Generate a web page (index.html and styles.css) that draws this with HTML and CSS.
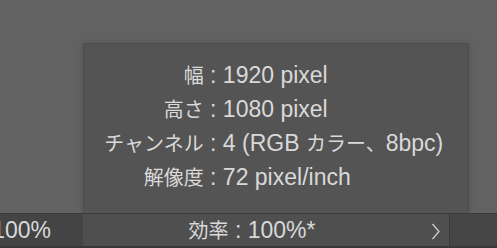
FILE: index.html
```html
<!DOCTYPE html>
<html>
<head>
    <meta charset="utf-8">
    <link rel="stylesheet" href="styles.css">
</head>
<body>
<div class="window">
    <div class="canvas">
        <div class="infoBox">
            <div class="infoRows">
                <div class="infoRow"><span class="label">幅</span> : 1920 pixel</div>
                <div class="infoRow"><span class="label">高さ</span> : 1080 pixel</div>
                <div class="infoRow"><span class="label">チャンネル</span> : 4 (RGB <span class="cjk">カラー、</span>8bpc)</div>
                <div class="infoRow"><span class="label">解像度</span> : 72 pixel/inch</div>
            </div>
        </div>
    </div>
    <div class="statusBar">
        <div class="zoomCell"><span>100%</span></div>
        <div class="statusField">
            <span class="statusText"><span class="cjk">効率</span> : 100%*</span>
            <svg class="arrow" width="10" height="32" viewBox="0 0 10 32">
                <polyline points="1.5,10 8,17.5 1.5,25" fill="none" stroke="#cfcfcf" stroke-width="1.3"/>
            </svg>
        </div>
        <div class="restCell"></div>
    </div>
    <div class="bottomStrip"></div>
</div>
</body>
</html>
```

FILE: styles.css
```css
body {
    margin: 0;
    background-color: #626262;
    color: #d9d9d9;
    font-family: "Liberation Sans", "Noto Sans CJK JP", sans-serif;
    font-size: 23px;
    overflow: hidden;
}
.window {
    width: 497px;
    height: 248px;
    display: flex;
    flex-direction: column;
}
.canvas {
    height: 213px;
    padding: 43px 0 0 83px;
    box-sizing: border-box;
}
.infoBox {
    width: 386px;
    height: 170px;
    box-sizing: border-box;
    background-color: #545454;
    border: 1px solid #4d4d4d;
    border-bottom: none;
    box-shadow: 0 0 6px rgba(0, 0, 0, 0.15);
    padding: 14px 5px 0 0;
    display: flex;
    justify-content: center;
}
.infoRows {
    display: flex;
    flex-direction: column;
}
.infoRow {
    height: 34px;
    line-height: 34px;
    white-space: nowrap;
}
.label {
    display: inline-block;
    width: 100px;
    text-align: right;
    font-size: 20px;
    line-height: 1;
}
.cjk {
    font-size: 20px;
    line-height: 1;
}
.statusBar {
    height: 32px;
    border-top: 1px solid #3b3b3b;
    display: flex;
    line-height: 32px;
    white-space: nowrap;
}
.zoomCell {
    width: 83px;
    background-color: #444444;
    display: flex;
    justify-content: flex-end;
    padding-right: 32px;
    box-sizing: border-box;
    overflow: hidden;
}
.statusField {
    width: 366px;
    background-color: #4f4f4f;
    display: flex;
    border-right: 1px solid #3a3a3a;
}
.statusText {
    flex: 1;
    text-align: center;
    padding-right: 10px;
}
.arrow {
    margin-right: 8px;
}
.restCell {
    flex: 1;
    background-color: #464646;
}
.bottomStrip {
    height: 2px;
    background-color: #383838;
}
```
